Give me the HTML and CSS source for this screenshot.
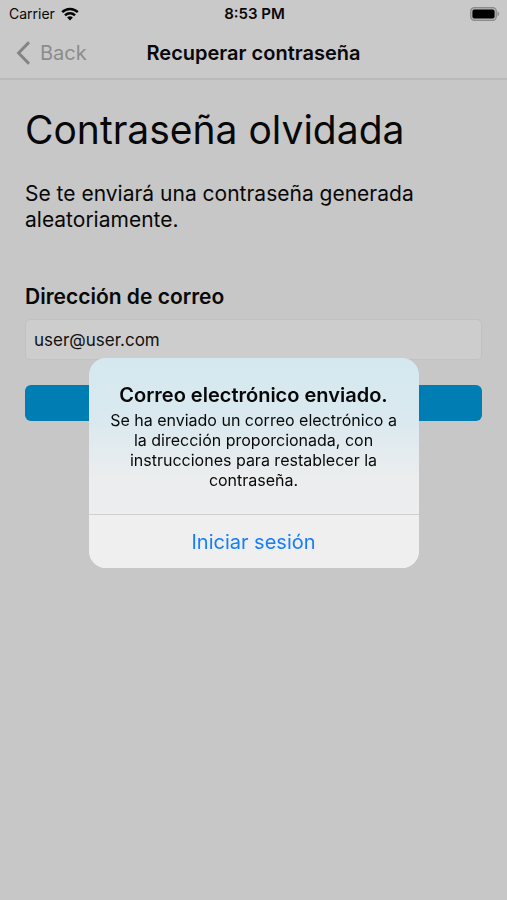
FILE: index.html
```html
<!DOCTYPE html>
<html lang="es">
<head>
<meta charset="utf-8">
<meta name="viewport" content="width=device-width, initial-scale=1">
<title>Recuperar contraseña</title>
<link rel="stylesheet" href="styles.css">
</head>
<body>
<header class="top">
  <div class="status">
    <div class="carrier">
      <span>Carrier</span>
      <svg class="wifi" viewBox="0 0 18 14" aria-hidden="true">
        <path d="M1.2 5.2a11.2 11.2 0 0 1 15.6 0M4 8.3a7.2 7.2 0 0 1 10 0" fill="none" stroke="#050505" stroke-width="2.5"/>
        <path d="M9 13.4 6.1 10.6a4.2 4.2 0 0 1 5.8 0z" fill="#050505"/>
      </svg>
    </div>
    <time class="clock">8:53 PM</time>
    <svg class="battery" viewBox="0 0 30 14" aria-hidden="true">
      <rect x="0.7" y="0.7" width="25.6" height="12.6" rx="3.6" fill="#b4b4b4" stroke="#8b8b8b" stroke-width="1.2"/>
      <rect x="2.4" y="2.4" width="22.2" height="9.2" rx="2" fill="#000"/>
      <path d="M27.5 4.6c2.2.9 2.2 3.9 0 4.8z" fill="#8b8b8b"/>
    </svg>
  </div>
  <nav class="nav">
    <a class="back" href="#">
      <svg class="chevron" viewBox="0 0 15 24" aria-hidden="true"><path d="M13 1.2 2.6 12 13 22.8" fill="none" stroke="#848484" stroke-width="3"/></svg>
      <span>Back</span>
    </a>
    <h1 class="nav-title">Recuperar contraseña</h1>
  </nav>
</header>
<main class="content">
  <h2 class="title">Contraseña olvidada</h2>
  <p class="lead">Se te enviará una contraseña generada aleatoriamente.</p>
  <form class="form">
    <label class="label" for="email">Dirección de correo</label>
    <input class="field" id="email" type="email" value="user@user.com">
    <button class="submit" type="button" aria-label="Enviar"></button>
  </form>
</main>
<div class="overlay">
  <section class="alert" role="alertdialog" aria-labelledby="alert-title" aria-describedby="alert-text">
    <div class="alert-body">
      <h2 class="alert-title" id="alert-title">Correo electrónico enviado.</h2>
      <p class="alert-text" id="alert-text">Se ha enviado un correo electrónico a la dirección proporcionada, con instrucciones para restablecer la contraseña.</p>
    </div>
    <button class="alert-action" type="button">Iniciar sesión</button>
  </section>
</div>
</body>
</html>
```

FILE: styles.css
```css
* {
  box-sizing: border-box;
}

body {
  margin: 0;
  min-height: 100vh;
  background: #c7c7c7;
  color: #080808;
  font-family: Inter, "Liberation Sans", sans-serif;
}

h1, h2, p {
  margin: 0;
}

.top {
  background: #c9c9c9;
  border-bottom: 2px solid #bababa;
}

.status {
  display: grid;
  grid-template-columns: 1fr auto 1fr;
  align-items: center;
  height: 27px;
  padding: 0 7px 0 9px;
  font-size: 14px;
}

.carrier {
  display: flex;
  align-items: center;
  gap: 6px;
}

.wifi {
  width: 18px;
  height: 14px;
}

.clock {
  font-size: 15px;
  font-weight: 600;
}

.battery {
  justify-self: end;
  width: 30px;
  height: 14px;
}

.nav {
  display: grid;
  grid-template-columns: 1fr auto 1fr;
  align-items: center;
  height: 51px;
  padding: 0 16px;
}

.back {
  display: flex;
  align-items: center;
  gap: 9px;
  color: #8c8c8c;
  font-size: 20px;
  text-decoration: none;
}

.chevron {
  width: 15px;
  height: 24px;
}

.nav-title {
  font-size: 20px;
  font-weight: 600;
}

.content {
  padding: 24px 25px;
}

.title {
  font-size: 39px;
  font-weight: 400;
  line-height: 52px;
}

.lead {
  margin-top: 25px;
  font-size: 21px;
  line-height: 26px;
}

.form {
  display: flex;
  flex-direction: column;
  margin-top: 50px;
}

.label {
  font-size: 21px;
  font-weight: 600;
  line-height: 28px;
}

.field {
  height: 41px;
  margin-top: 8px;
  padding: 0 8px;
  border: 1px solid #c1c1c1;
  border-radius: 5px;
  background: #cdcdcd;
  color: #111;
  font: 400 17px Inter, "Liberation Sans", sans-serif;
}

.submit {
  height: 36px;
  margin-top: 25px;
  border: 0;
  border-radius: 6px;
  background: #007db3;
}

.overlay {
  position: fixed;
  inset: 0;
  display: grid;
  place-items: center;
  padding: 26px 20px 0;
}

.alert {
  width: 100%;
  max-width: 330px;
  overflow: hidden;
  border-radius: 17px;
  background: linear-gradient(#d5e8f0, #dae9ef 30%, #ebedee 56%, #efefef);
  text-align: center;
}

.alert-body {
  padding: 24px 20px;
}

.alert-title {
  font-size: 20px;
  font-weight: 600;
  line-height: 26px;
}

.alert-text {
  margin-top: 2px;
  font-size: 16px;
  line-height: 20px;
}

.alert-action {
  width: 100%;
  height: 54px;
  border: 0;
  border-top: 1px solid #cfcfcf;
  background: #efefef;
  color: #157efb;
  font: 400 20px Inter, "Liberation Sans", sans-serif;
}
```
